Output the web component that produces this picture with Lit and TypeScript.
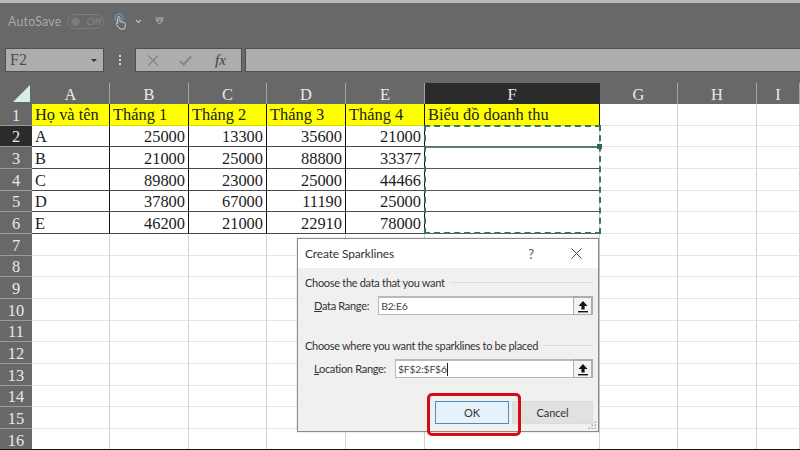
import { LitElement, html, css, svg } from "lit";
import { customElement } from "lit/decorators.js";

const COLS = ["A", "B", "C", "D", "E", "F", "G", "H", "I"];
const ROWS: (string | number)[][] = [
  ["Họ và tên", "Tháng 1", "Tháng 2", "Tháng 3", "Tháng 4", "Biểu đồ doanh thu"],
  ["A", 25000, 13300, 35600, 21000, ""],
  ["B", 21000, 25000, 88800, 33377, ""],
  ["C", 89800, 23000, 25000, 44466, ""],
  ["D", 37800, 67000, 11190, 25000, ""],
  ["E", 46200, 21000, 22910, 78000, ""],
];

const upIcon = svg`<svg width="12" height="13" viewBox="0 0 12 13"><path d="M6 1 L10.5 6 H7.6 V9.5 H4.4 V6 H1.5 Z" fill="#111"/><rect x="1" y="11" width="10" height="1.4" fill="#111"/></svg>`;

@customElement("app-root")
export class AppRoot extends LitElement {
  static styles = css`
    :host {
      display: block;
      width: 800px;
      height: 450px;
      overflow: hidden;
    }
    .app {
      position: relative;
      width: 800px;
      height: 450px;
      display: flex;
      flex-direction: column;
      background: #686868;
      font-family: Lato, "Open Sans", sans-serif;
    }
    .topline { height: 3px; background: #b9b9b9; flex: none; }
    .titlebar {
      height: 37px;
      flex: none;
      display: flex;
      align-items: center;
      padding: 0 0 1px 8px;
      box-sizing: border-box;
      color: #a9a9a9;
      font-size: 12.4px;
      letter-spacing: 0.2px;
    }
    .toggle {
      margin-left: 6px;
      width: 37px;
      height: 15px;
      box-sizing: border-box;
      border: 1px solid #7c7c7c;
      border-radius: 8px;
      display: flex;
      align-items: center;
      padding-left: 3px;
      gap: 6px;
      color: #868686;
      font-size: 10px;
      letter-spacing: 0;
    }
    .knob { width: 9px; height: 9px; border-radius: 50%; background: #7e7e7e; border: 1px solid #747474; box-sizing: border-box; }
    .touch { margin-left: 10px; display: block; }
    .chev { margin-left: 8px; display: block; }
    .qat { margin-left: 13px; display: block; }
    .formula {
      height: 24px;
      flex: none;
      margin-top: 8px;
      display: flex;
      padding-left: 5px;
    }
    .namebox, .fxbox, .input {
      background: #adadad;
      border: 1px solid #4f4f4f;
      box-sizing: border-box;
      height: 24px;
    }
    .namebox {
      width: 99px;
      display: flex;
      align-items: center;
      justify-content: space-between;
      padding: 0 6px 0 4px;
      font: 16px "Liberation Serif", serif;
      color: #4e4e4e;
    }
    .caret { width: 0; height: 0; border: 3px solid transparent; border-top: 3px solid #333; border-bottom: 0; }
    .dots {
      width: 31px;
      display: flex;
      flex-direction: column;
      align-items: center;
      justify-content: center;
      gap: 2px;
    }
    .dots i { width: 2px; height: 2px; background: #d8d8d8; }
    .fxbox {
      width: 107px;
      display: flex;
      align-items: center;
      padding-left: 11px;
      gap: 20px;
    }
    .fx {
      margin-left: 3px;
      font: italic 15px "Liberation Serif", serif;
      color: #3f3f3f;
    }
    .input { margin-left: 3px; flex: 1; border-right: 0; }
    .sheet {
      position: relative;
      margin-top: 11px;
      flex: 1;
      min-height: 0;
      overflow: hidden;
      display: grid;
      grid-template-columns: 32px 78px 79px 78px 79px 79px 175px 78px 79px 43px;
      grid-template-rows: 21px repeat(16, 21.66px);
      background: #fff;
      font: 16.4px "Liberation Serif", serif;
      color: #1c1c1c;
    }
    .colhead, .rowhead, .corner {
      background: #686868;
      color: #e8e8e8;
      display: flex;
      align-items: center;
      justify-content: center;
      box-sizing: border-box;
    }
    .corner { align-items: flex-end; justify-content: flex-end; padding: 0 2px 2px 0; }
    .colhead { border-right: 1px solid #a5a5a5; padding-top: 2px; }
    .colhead.sel, .rowhead.sel { background: #2b2b2b; }
    .colhead.sel { border-right-color: #2b2b2b; }
    .rowhead { border-bottom: 1px solid #9a9a9a; padding-top: 3px; }
    .cell {
      box-sizing: border-box;
      border-right: 1px solid #d2d2d2;
      border-bottom: 1px solid #e6e6e6;
      display: flex;
      align-items: center;
      padding: 3px 3px 0 3px;
      white-space: nowrap;
      overflow: hidden;
    }
    .cell.num { justify-content: flex-end; }
    .cell.data { border-right: 1px solid #111; border-bottom: 1px solid #4a4a4a; }
    .cell.yellow { background: #ffff00; border-right: 1px solid #111; border-bottom: 1px solid #d8d800; color: #222; padding-top: 2px; }
    .cell.fcol { border-right: 1px solid #d2d2d2; border-bottom: 1px solid #555; }
    .ants {
      grid-column: 7 / 8;
      grid-row: 3 / 8;
      position: absolute;
      inset: -1px -1px 0 -1px;
      border: 2px dashed #3b7558;
      pointer-events: none;
    }
    .active {
      height: 21px;
      box-sizing: border-box;
      border-bottom: 2px solid #55806a;
      position: relative;
    }
    .handle {
      position: absolute;
      right: -3px;
      bottom: -3px;
      width: 5px;
      height: 5px;
      background: #2e6b4c;
    }
    .bottomline { height: 1.5px; background: #111; flex: none; }

    .dialog {
      position: absolute;
      left: 297px;
      top: 238px;
      width: 302px;
      height: 194px;
      box-sizing: border-box;
      border: 1px solid #8a8a8a;
      background: #f0f0f0;
      color: #333;
      font-size: 11px;
      letter-spacing: -0.3px;
      display: flex;
      flex-direction: column;
      box-shadow: 0 0 2px rgba(0, 0, 0, 0.2);
    }
    .dlg-title {
      height: 29px;
      flex: none;
      background: #fff;
      display: flex;
      align-items: center;
      padding: 0 16px 0 7px;
      font-size: 12px;
      letter-spacing: -0.15px;
      color: #333;
    }
    .dlg-title span { flex: 1; }
    .help { font-size: 13px; color: #555; margin-right: 37px; }
    .dlg-body { flex: 1; padding: 6px 5px 0 7px; display: flex; flex-direction: column; position: relative; }
    .legend { display: flex; align-items: center; gap: 5px; height: 16px; white-space: nowrap; }
    .legend::after { content: ""; flex: 1; height: 1px; background: #dcdcdc; }
    .field { display: flex; align-items: center; height: 19px; margin-top: 6px; padding-left: 9px; }
    .field label { margin-right: 9px; white-space: nowrap; }
    .range {
      flex: 1;
      height: 19px;
      box-sizing: border-box;
      background: #fff;
      border: 1px solid #b9b9b9;
      border-top-width: 2px;
      border-right: 0;
      padding-left: 2px;
      display: flex;
      align-items: center;
      font-size: 10.4px;
      letter-spacing: -0.2px;
      color: #444;
    }
    .caretline { display: inline-block; width: 1px; height: 13px; background: #222; margin-left: 0; }
    .pick {
      width: 20px;
      height: 19px;
      box-sizing: border-box;
      border: 1px solid #adadad;
      border-width: 2px 2px 1px 1px;
      background: #f3f3f3;
      display: flex;
      align-items: center;
      justify-content: center;
    }
    .second { margin-top: 22px; }
    .buttons { display: flex; margin-top: 23px; padding-left: 130px; gap: 3px; }
    .btn {
      height: 23px;
      box-sizing: border-box;
      display: flex;
      align-items: center;
      justify-content: center;
      font-size: 11px;
      letter-spacing: -0.1px;
      color: #333;
    }
    .ok { width: 74px; background: #e5f1fb; border: 1px solid #4a8fc0; position: relative; }
    .cancel { width: 81px; background: #e1e1e1; border: 1px solid #dcdcdc; }
    .ok::after {
      content: "";
      position: absolute;
      left: -9px;
      right: -13px;
      top: -9px;
      bottom: -13px;
      border: 3px solid #d40d14;
      border-radius: 5px;
    }
    .grip { position: absolute; right: 1px; bottom: 1px; display: block; }
  `;

  private renderCell(v: string | number, r: number, c: number) {
    if (r === 0) return html`<div class="cell yellow">${v}</div>`;
    if (c === 5) return html`<div class="cell fcol"></div>`;
    return html`<div class="cell data ${typeof v === "number" ? "num" : ""}">${v}</div>`;
  }

  private renderSheet() {
    const cells = [];
    cells.push(html`<div class="corner"><svg width="17" height="17" viewBox="0 0 17 17"><path d="M17 0V17H0Z" fill="#d6efe3"/></svg></div>`);
    COLS.forEach((c) => cells.push(html`<div class="colhead ${c === "F" ? "sel" : ""}">${c}</div>`));
    for (let r = 0; r < 16; r++) {
      cells.push(html`<div class="rowhead ${r === 1 ? "sel" : ""}">${r + 1}</div>`);
      for (let c = 0; c < 9; c++) {
        if (r < 6 && c < 6) cells.push(this.renderCell(ROWS[r][c], r, c));
        else cells.push(html`<div class="cell"></div>`);
      }
    }
    return cells;
  }

  render() {
    return html`
      <div class="app">
        <div class="topline"></div>
        <div class="titlebar">
          <span>AutoSave</span>
          <div class="toggle"><div class="knob"></div><span>Off</span></div>
          <svg class="touch" width="13" height="17" viewBox="0 0 13 17" fill="none">
            <circle cx="5" cy="5" r="4" stroke="#5f93b8" stroke-width="1.4"/>
            <path d="M3.7 10.5V4.6a1.1 1.1 0 0 1 2.2 0V8.6l4 .9c1 .3 1.6 1 1.5 2l-.4 3.2-.5 1.3H6l-3.6-4.6c-.6-1 .5-1.8 1.3-1.1Z" fill="#686868" stroke="#cfcfcf" stroke-width="1"/>
          </svg>
          <svg class="chev" width="7" height="5" viewBox="0 0 7 5" fill="none"><path d="M1 1l2.5 2.5L6 1" stroke="#c4c4c4" stroke-width="1.2"/></svg>
          <svg class="qat" width="9" height="8" viewBox="0 0 9 8" fill="none"><path d="M.5 1H8.5M1 3L4.5 7L8 3Z" stroke="#bdbdbd"/></svg>
        </div>
        <div class="formula">
          <div class="namebox"><span>F2</span><div class="caret"></div></div>
          <div class="dots"><i></i><i></i><i></i></div>
          <div class="fxbox">
            <svg width="12" height="11" viewBox="0 0 12 11" fill="none"><path d="M1 .5L11 10.5M11 .5L1 10.5" stroke="#868686" stroke-width="1.4"/></svg>
            <svg width="13" height="11" viewBox="0 0 13 11" fill="none"><path d="M1 6l3.6 3.6L12 1.5" stroke="#868686" stroke-width="2"/></svg>
            <span class="fx">fx</span>
          </div>
          <div class="input"></div>
        </div>
        <div class="sheet">
          ${this.renderSheet()}
          <div class="ants"><div class="active"><div class="handle"></div></div></div>
        </div>
        <div class="bottomline"></div>
        <div class="dialog">
          <div class="dlg-title">
            <span>Create Sparklines</span>
            <div class="help">?</div>
            <svg width="11" height="11" viewBox="0 0 11 11" fill="none"><path d="M.5 .5L10.5 10.5M10.5 .5L.5 10.5" stroke="#444"/></svg>
          </div>
          <div class="dlg-body">
            <div class="legend">Choose the data that you want</div>
            <div class="field">
              <label><u>D</u>ata Range:</label>
              <div class="range">B2:E6</div>
              <div class="pick">${upIcon}</div>
            </div>
            <div class="legend second">Choose where you want the sparklines to be placed</div>
            <div class="field">
              <label><u>L</u>ocation Range:</label>
              <div class="range">$F$2:$F$6<span class="caretline"></span></div>
              <div class="pick">${upIcon}</div>
            </div>
            <div class="buttons">
              <div class="btn ok">OK</div>
              <div class="btn cancel">Cancel</div>
            </div>
            <svg class="grip" width="9" height="9" viewBox="0 0 9 9" fill="#a8a8a8">
              <rect x="6.5" y="0.5" width="1.5" height="1.5"/><rect x="3.5" y="3.5" width="1.5" height="1.5"/><rect x="6.5" y="3.5" width="1.5" height="1.5"/>
              <rect x="0.5" y="6.5" width="1.5" height="1.5"/><rect x="3.5" y="6.5" width="1.5" height="1.5"/><rect x="6.5" y="6.5" width="1.5" height="1.5"/>
            </svg>
          </div>
        </div>
      </div>
    `;
  }
}
